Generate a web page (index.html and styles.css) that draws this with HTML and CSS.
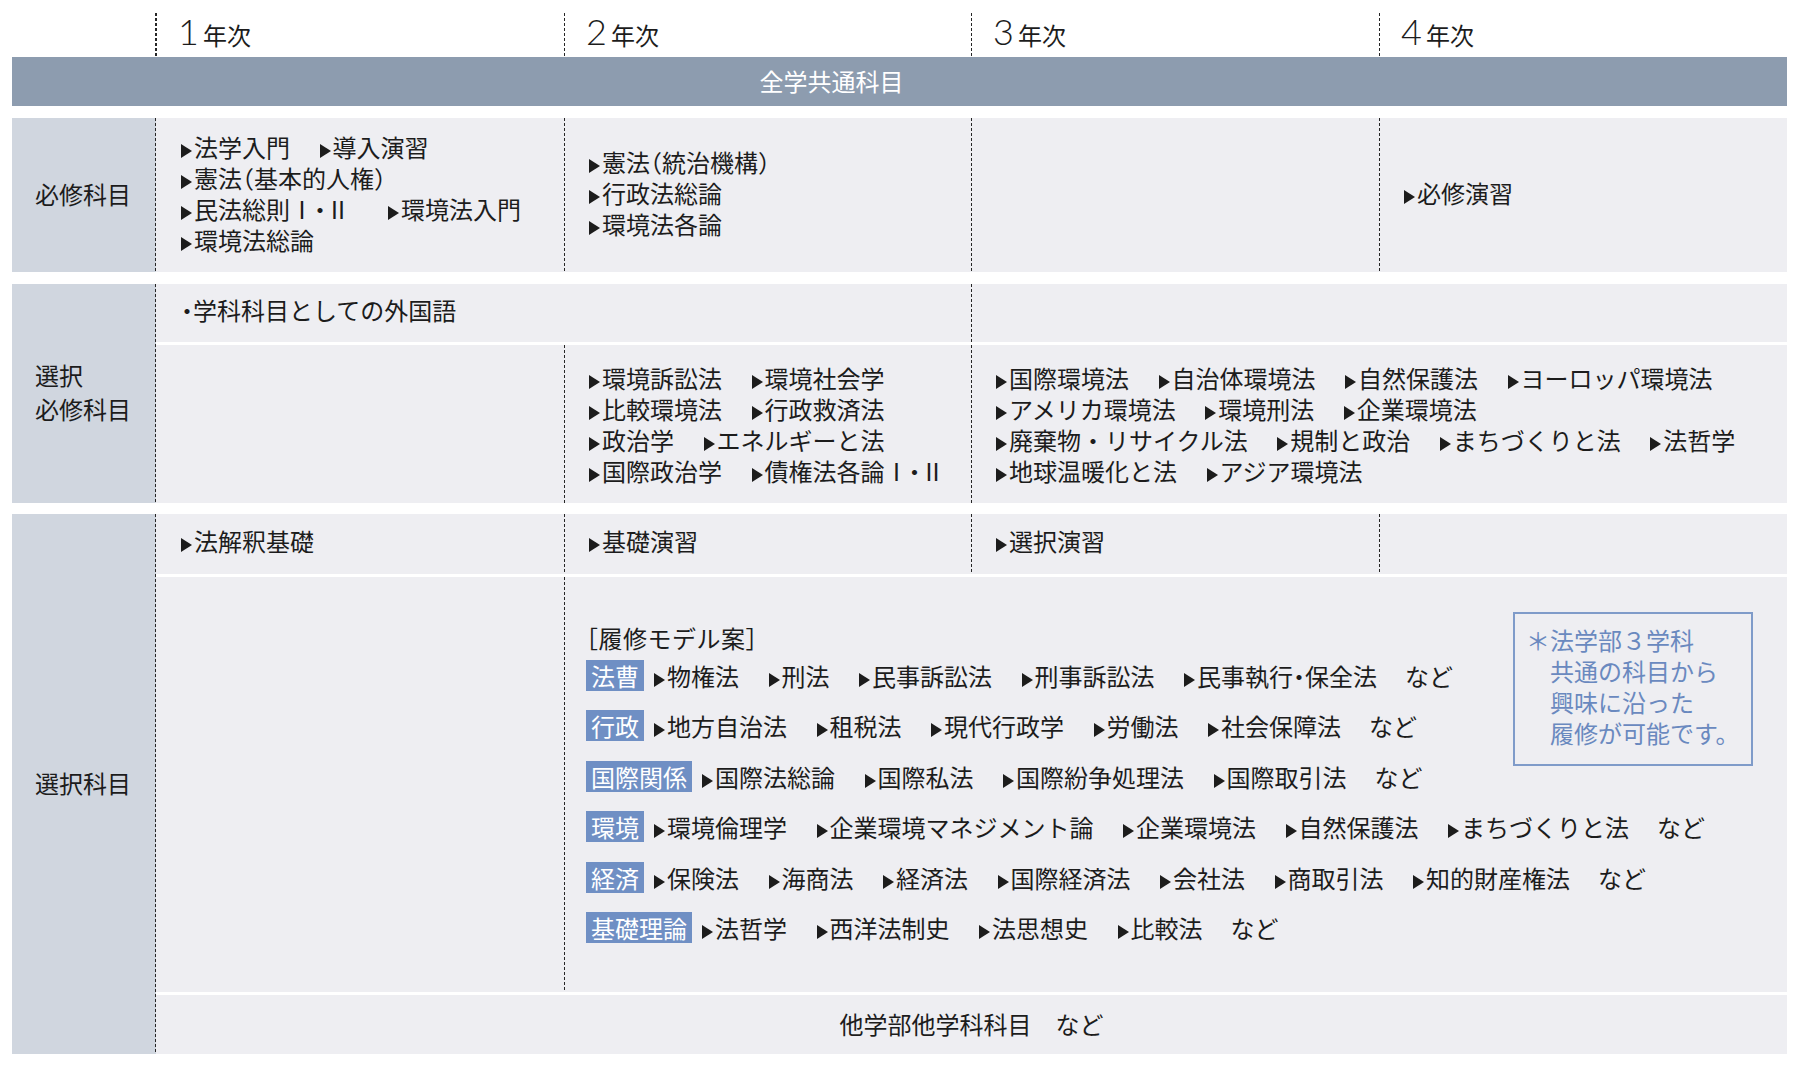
FILE: index.html
```html
<!DOCTYPE html>
<html lang="ja">
<head>
<meta charset="utf-8">
<title>カリキュラム</title>
<link rel="stylesheet" href="styles.css">
</head>
<body>
<div class="chart">
  <div class="head">
    <div class="hc first"></div>
    <div class="hc yr"><span class="num">1</span>年次</div>
    <div class="hc yr"><span class="num">2</span>年次</div>
    <div class="hc yr"><span class="num">3</span>年次</div>
    <div class="hc yr"><span class="num">4</span>年次</div>
  </div>
  <div class="bar">全学共通科目</div>

  <div class="grp g1">
    <div class="lab">必修科目</div>
    <div class="cell">
      <div class="ln"><span class="i">法学入門</span><span class="i">導入演習</span></div>
      <div class="ln"><span class="i">憲法<span class="h">（</span>基本的人権<span class="h">）</span></span></div>
      <div class="ln"><span class="i">民法総則Ⅰ<span class="h">・</span>Ⅱ</span><span class="i wide">環境法入門</span></div>
      <div class="ln"><span class="i">環境法総論</span></div>
    </div>
    <div class="cell dl">
      <div class="ln"><span class="i">憲法<span class="h">（</span>統治機構<span class="h">）</span></span></div>
      <div class="ln"><span class="i">行政法総論</span></div>
      <div class="ln"><span class="i">環境法各論</span></div>
    </div>
    <div class="cell dl"></div>
    <div class="cell dl">
      <div class="ln"><span class="i">必修演習</span></div>
    </div>
  </div>

  <div class="grp g2">
    <div class="lab">選択<br>必修科目</div>
    <div class="cell c12 top">
      <div class="ln"><span class="h">・</span>学科科目としての外国語</div>
    </div>
    <div class="cell c34 dl"></div>
    <div class="cell lo"></div>
    <div class="cell dl lo">
      <div class="ln"><span class="i">環境訴訟法</span><span class="i">環境社会学</span></div>
      <div class="ln"><span class="i">比較環境法</span><span class="i">行政救済法</span></div>
      <div class="ln"><span class="i">政治学</span><span class="i">エネルギーと法</span></div>
      <div class="ln"><span class="i">国際政治学</span><span class="i">債権法各論Ⅰ<span class="h">・</span>Ⅱ</span></div>
    </div>
    <div class="cell c34 dl lo">
      <div class="ln"><span class="i">国際環境法</span><span class="i">自治体環境法</span><span class="i">自然保護法</span><span class="i">ヨーロッパ環境法</span></div>
      <div class="ln"><span class="i">アメリカ環境法</span><span class="i">環境刑法</span><span class="i">企業環境法</span></div>
      <div class="ln"><span class="i">廃棄物・リサイクル法</span><span class="i">規制と政治</span><span class="i">まちづくりと法</span><span class="i">法哲学</span></div>
      <div class="ln"><span class="i">地球温暖化と法</span><span class="i">アジア環境法</span></div>
    </div>
  </div>

  <div class="grp g3">
    <div class="lab">選択科目</div>
    <div class="cell top"><div class="ln"><span class="i">法解釈基礎</span></div></div>
    <div class="cell dl top"><div class="ln"><span class="i">基礎演習</span></div></div>
    <div class="cell dl top"><div class="ln"><span class="i">選択演習</span></div></div>
    <div class="cell dl"></div>
    <div class="cell"></div>
    <div class="cell c234 dl model">
      <div class="note">
        <div>＊法学部３学科</div>
        <div>　共通の科目から</div>
        <div>　興味に沿った</div>
        <div>　履修が可能です。</div>
      </div>
      <div class="mlist">
        <div class="mhead"><span class="h">［</span>履修モデル案］</div>
        <div class="mrow"><span class="tag">法曹</span><span class="i">物権法</span><span class="i">刑法</span><span class="i">民事訴訟法</span><span class="i">刑事訴訟法</span><span class="i">民事執行<span class="h">・</span>保全法</span><span class="etc">など</span></div>
        <div class="mrow"><span class="tag">行政</span><span class="i">地方自治法</span><span class="i">租税法</span><span class="i">現代行政学</span><span class="i">労働法</span><span class="i">社会保障法</span><span class="etc">など</span></div>
        <div class="mrow"><span class="tag">国際関係</span><span class="i">国際法総論</span><span class="i">国際私法</span><span class="i">国際紛争処理法</span><span class="i">国際取引法</span><span class="etc">など</span></div>
        <div class="mrow"><span class="tag">環境</span><span class="i">環境倫理学</span><span class="i">企業環境マネジメント論</span><span class="i">企業環境法</span><span class="i">自然保護法</span><span class="i">まちづくりと法</span><span class="etc">など</span></div>
        <div class="mrow"><span class="tag">経済</span><span class="i">保険法</span><span class="i">海商法</span><span class="i">経済法</span><span class="i">国際経済法</span><span class="i">会社法</span><span class="i">商取引法</span><span class="i">知的財産権法</span><span class="etc">など</span></div>
        <div class="mrow"><span class="tag">基礎理論</span><span class="i">法哲学</span><span class="i">西洋法制史</span><span class="i">法思想史</span><span class="i">比較法</span><span class="etc">など</span></div>
      </div>
    </div>
    <div class="cell c1234 other">他学部他学科科目　など</div>
  </div>
</div>
</body>
</html>
```

FILE: styles.css
```css
* {
  box-sizing: border-box;
  margin: 0;
  padding: 0;
}

html,
body {
  background: #ffffff;
}

body {
  font-family: "Noto Sans CJK JP", "Noto Sans", sans-serif;
  font-size: 24px;
  line-height: 31px;
  color: #1c1c1c;
}

.chart {
  width: 1775px;
  margin-left: 12px;
}

/* header */
.head {
  display: grid;
  grid-template-columns: 144px 408px 407px 408px 408px;
  height: 57px;
  padding-top: 13px;
}

.hc {
  height: 44px;
}

.hc.first {
  background: linear-gradient(#262626 60%, transparent 60%) right top / 1px 5px repeat-y;
}

.yr {
  padding-left: 22px;
  padding-top: 0;
  line-height: 40px;
  white-space: nowrap;
  background: linear-gradient(#262626 60%, transparent 60%) left top / 1px 5px repeat-y;
}

.num {
  font-family: "Lato", "Open Sans", sans-serif;
  font-weight: 300;
  font-size: 36px;
  line-height: 1;
  margin-right: 4px;
}

/* common bar */
.bar {
  height: 49px;
  background: #8d9caf;
  color: #ffffff;
  display: flex;
  align-items: center;
  justify-content: center;
  padding-right: 136px;
  padding-bottom: 2px;
}

/* groups */
.grp {
  display: grid;
  grid-template-columns: 144px 408px 407px 408px 408px;
  row-gap: 3px;
  background: #ffffff;
}

.g1 {
  margin-top: 12px;
  grid-template-rows: 154px;
}

.g2 {
  margin-top: 12px;
  grid-template-rows: 58px 158px;
}

.g3 {
  margin-top: 11px;
  grid-template-rows: 60px 415px 59px;
}

.lab {
  grid-row: 1 / -1;
  display: flex;
  align-items: center;
  padding-left: 23px;
  padding-bottom: 3px;
  line-height: 34px;
  background: linear-gradient(#262626 60%, transparent 60%) right top / 1px 5px repeat-y, #d0d6df;
}

.cell {
  background: #eeeef2;
  display: flex;
  flex-direction: column;
  justify-content: center;
  padding-left: 25px;
  padding-bottom: 5px;
  white-space: nowrap;
}

.cell.top {
  padding-bottom: 8px;
}

.cell.lo {
  padding-bottom: 0;
}

.cell.dl {
  background: linear-gradient(#262626 60%, transparent 60%) left top / 1px 5px repeat-y, #eeeef2;
}

.c12 {
  grid-column: 2 / 4;
}

.c34 {
  grid-column: 4 / 6;
}

.c234 {
  grid-column: 3 / 6;
}

.c1234 {
  grid-column: 2 / 6;
}

.ln {
  white-space: nowrap;
}

/* items with triangle marker */
.i::before {
  content: "";
  display: inline-block;
  width: 0;
  height: 0;
  border-left: 11px solid #1c1c1c;
  border-top: 7px solid transparent;
  border-bottom: 7px solid transparent;
  margin-right: 2px;
  vertical-align: -1px;
}

.i + .i {
  margin-left: 29.5px;
}

.i + .etc {
  margin-left: 28px;
}

.i.wide {
  margin-left: 38px;
}

.h {
  font-feature-settings: "halt";
}

/* model block */
.cell.model {
  display: block;
  padding: 35px 0 0 22px;
}

.note {
  float: right;
  width: 240px;
  margin-right: 34px;
  border: 2px solid #7f9bc9;
  padding: 10px 8px 16px 11px;
  color: #6a89bf;
  line-height: 31px;
}

.mlist {
  padding-top: 10px;
}

.mhead {
  line-height: 31px;
  margin-bottom: -3px;
  letter-spacing: 0.5px;
}

.mrow {
  display: flex;
  align-items: center;
  height: 50.5px;
  white-space: nowrap;
}

.tag {
  display: inline-block;
  height: 31px;
  line-height: 31px;
  padding: 0 5px;
  margin-right: 10px;
  background: #6f8fc4;
  color: #ffffff;
}

.other {
  align-items: center;
  padding-left: 0;
  padding-bottom: 2px;
}
```
